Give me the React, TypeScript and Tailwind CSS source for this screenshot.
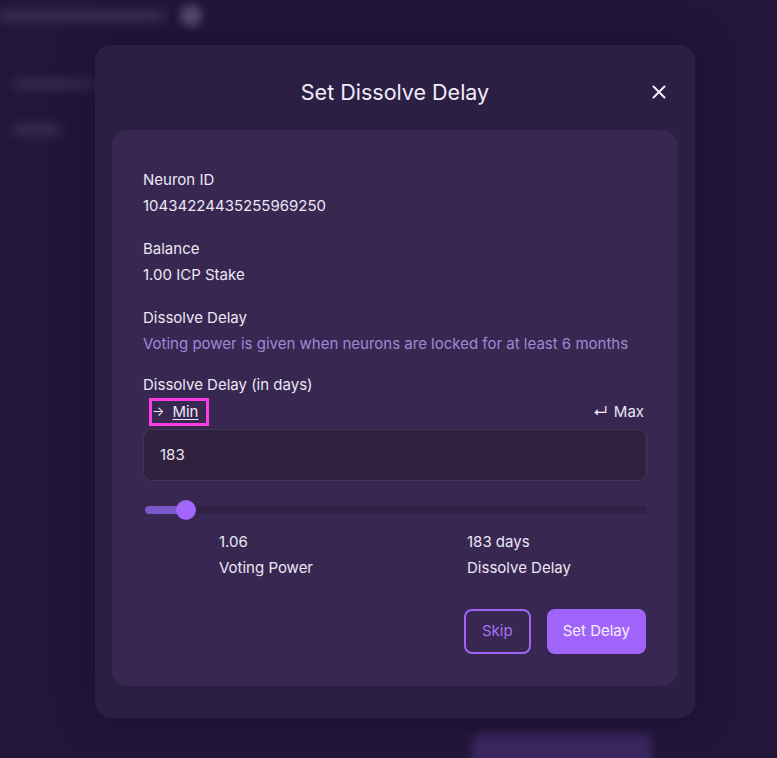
import React from "react";

const font = { fontFamily: "Inter, 'Noto Sans', sans-serif" };

function Field({ label, value, valueClass = "text-[#ece6f5]" }: { label: string; value: string; valueClass?: string }) {
  return (
    <div className="flex flex-col gap-[7px]">
      <p className="text-[15px] leading-[19px] text-[#ece6f5]">{label}</p>
      <p className={`text-[15px] leading-[19px] ${valueClass}`}>{value}</p>
    </div>
  );
}

export default function App() {
  return (
    <div className="relative h-[758px] w-[777px] overflow-hidden bg-[#22163a]" style={font}>
      {/* blurred backdrop */}
      <div className="absolute left-[0px] top-[10px] h-[12px] w-[165px] rounded-full bg-[#3a2d52] blur-[5px]" />
      <div className="absolute left-[180px] top-[5px] h-[22px] w-[22px] rounded-full bg-[#564869] blur-[4px]" />
      <div className="absolute left-[12px] top-[78px] h-[12px] w-[85px] rounded-full bg-[#34284c] blur-[5px]" />
      <div className="absolute left-[12px] top-[123px] h-[14px] w-[50px] rounded-full bg-[#34284c] blur-[5px]" />
      <div className="absolute left-[472px] top-[733px] h-[40px] w-[180px] rounded-lg bg-[#3c2660] blur-[4px]" />

      <div className="relative pl-[95px] pt-[45px]">
        <div className="w-[600px] rounded-[16px] bg-[#2c1f44] px-[17px] pb-[32px] shadow-[0_0_40px_rgba(15,8,30,0.4)]">
          <div className="relative flex h-[85px] items-center justify-center pt-[10px]">
            <h2 className="text-[21.5px] text-[#f1ecf8]">Set Dissolve Delay</h2>
            <button className="absolute right-[12px] top-[40px] text-[#f1ecf8]">
              <svg width="14" height="14" viewBox="0 0 14 14" fill="none" stroke="currentColor" strokeWidth="2" strokeLinecap="round">
                <path d="M1.5 1.5l11 11M12.5 1.5l-11 11" />
              </svg>
            </button>
          </div>

          <div className="rounded-[16px] bg-[#382851] px-[31px] pb-[32px] pt-[40px]">
            <div className="flex flex-col gap-[24px]">
              <Field label="Neuron ID" value="10434224435255969250" />
              <Field label="Balance" value="1.00 ICP Stake" />
              <Field
                label="Dissolve Delay"
                value="Voting power is given when neurons are locked for at least 6 months"
                valueClass="text-[#a386d6]"
              />
            </div>

            <p className="mt-[22px] text-[15px] leading-[19px] text-[#ece6f5]">Dissolve Delay (in days)</p>
            <div className="mt-[4px] flex items-center justify-between">
              <button className="ml-[6px] flex h-[28px] w-[60px] items-center gap-[8px] border-[3px] border-[#ff3de3] text-[15px] text-[#ece6f5]">
                <span className="text-[13px]">→</span>
                <span className="underline underline-offset-2">Min</span>
              </button>
              <button className="flex items-center gap-[6px] pr-[3px] text-[15px] text-[#ece6f5]">
                <span className="text-[15px]">↵</span>
                Max
              </button>
            </div>

            <div className="mt-[3px] flex h-[52px] items-center rounded-[8px] border border-[#43355b] bg-[#30223f] px-[16px] text-[15px] text-[#ece6f5]">
              183
            </div>

            <div className="relative mt-[19px] h-[20px]">
              <div className="absolute left-[2px] right-0 top-[6px] h-[8px] rounded-full bg-[#2f2245]" />
              <div className="absolute left-[2px] top-[6px] h-[8px] w-[40px] rounded-full bg-[#7a58c9]" />
              <div className="absolute left-[33px] top-0 h-[20px] w-[20px] rounded-full bg-[#a266fb]" />
            </div>

            <div className="mt-[12px] grid grid-cols-[248px_1fr] pl-[76px]">
              <Field label="1.06" value="Voting Power" />
              <Field label="183 days" value="Dissolve Delay" />
            </div>

            <div className="mt-[32px] flex justify-end gap-[16px] pr-[1px]">
              <button className="h-[45px] rounded-[8px] border-2 border-[#a064f5] px-[16px] text-[15px] text-[#a971f6]">
                Skip
              </button>
              <button className="h-[45px] rounded-[8px] bg-[#a064fa] px-[16px] text-[15px] text-[#f4eefc]">
                Set Delay
              </button>
            </div>
          </div>
        </div>
      </div>
    </div>
  );
}
